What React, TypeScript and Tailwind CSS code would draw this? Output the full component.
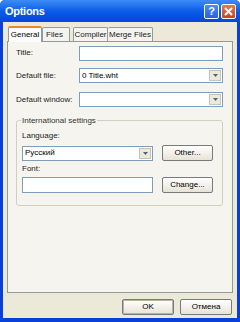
import React from 'react'

function Field({ value = '', arrow = false, className = '' }: { value?: string; arrow?: boolean; className?: string }) {
  return (
    <div className={`flex items-center bg-white border border-[#7f9db9] h-[15px] ${className}`}>
      <span className="flex-1 pl-[2px] text-[8px] leading-none text-black truncate">{value}</span>
      {arrow && (
        <span className="w-[12px] h-[11px] mr-[1px] flex items-center justify-center bg-[#ece9d8] border border-[#c3c3c3]">
          <svg width="5" height="3" viewBox="0 0 5 3"><path d="M0 0h5L2.5 3z" fill="#4d6185" /></svg>
        </span>
      )}
    </div>
  )
}

function Btn({ label, className = '' }: { label: string; className?: string }) {
  return (
    <div className={`flex items-center justify-center h-[16px] border border-[#7a7a7a] rounded-[2px] bg-gradient-to-b from-white to-[#e6e3d6] text-[8px] text-black ${className}`}>
      {label}
    </div>
  )
}

export default function App() {
  return (
    <div className="w-[240px] h-[322px] flex flex-col bg-[#0a3fd8] rounded-t-[5px] overflow-hidden font-['Liberation_Sans',sans-serif] text-[8px] text-[#222] whitespace-nowrap">
      {/* Title bar */}
      <div className="h-[22px] flex items-center justify-between pl-[5px] pr-[4px] bg-gradient-to-b from-[#3d8cf5] via-[#0a5ce8] to-[#0846d8]">
        <span className="text-white font-bold text-[11px] tracking-tight">Options</span>
        <div className="flex gap-[2px]">
          <div className="w-[15px] h-[15px] rounded-[2px] border border-white bg-gradient-to-b from-[#4c8cf5] to-[#2a5fdc] flex items-center justify-center text-white font-bold text-[11px] leading-none">?</div>
          <div className="w-[15px] h-[15px] rounded-[2px] border border-white bg-gradient-to-b from-[#e8784f] to-[#c8431e] flex items-center justify-center">
            <svg width="9" height="9" viewBox="0 0 9 9"><path d="M1 1l7 7M8 1L1 8" stroke="white" strokeWidth="2" /></svg>
          </div>
        </div>
      </div>

      {/* Body */}
      <div className="flex-1 mx-[3px] mb-[4px] bg-[#ece9d8] flex flex-col px-[4px]">
        {/* Tabs */}
        <div className="flex items-end mt-[4px] h-[15px] pl-[1px]">
          <div className="h-[16px] w-[34px] justify-center flex items-center bg-[#fcfcfe] border border-b-0 border-[#919b9c] border-t-[#e68b2c] border-t-2 rounded-t-[2px] text-black relative z-10 -mb-[1px]">General</div>
          <div className="h-[14px] w-[28px] px-[3px] flex items-center bg-[#f4f3ee] border border-b-0 border-[#919b9c] rounded-t-[2px]">Files</div>
          <div className="h-[14px] w-[35px] ml-[3px] justify-center flex items-center bg-[#f4f3ee] border border-b-0 border-[#919b9c] rounded-t-[2px]">Compiler</div>
          <div className="h-[14px] w-[45px] justify-center flex items-center bg-[#f4f3ee] border border-b-0 border-l-0 border-[#919b9c] rounded-t-[2px]">Merge Files</div>
        </div>

        {/* Panel */}
        <div className="h-[252px] border border-[#919b9c] bg-[#f5f4ee] pl-[8px] pr-[9px] pt-[4px] flex flex-col">
          <div className="flex items-center h-[14px]">
            <span className="w-[63px]">Title:</span>
            <Field className="flex-1" />
          </div>
          <div className="flex items-center h-[15px] mt-[8px]">
            <span className="w-[63px]">Default file:</span>
            <Field className="flex-1" value="0 Title.wht" arrow />
          </div>
          <div className="flex items-center h-[15px] mt-[9px]">
            <span className="w-[63px]">Default window:</span>
            <Field className="flex-1" arrow />
          </div>

          {/* Group box */}
          <div className="relative mt-[13px] h-[86px] border border-[#d0d0bf] rounded-[3px] px-[5px] pt-[10px]">
            <span className="absolute -top-[6px] left-[4px] px-[1px] bg-[#f5f4ee] text-[#333]">International settings</span>
            <div className="h-[10px] leading-[10px]">Language:</div>
            <div className="flex items-center mt-[4px] h-[16px]">
              <Field className="w-[131px]" value="Русский" arrow />
              <Btn label="Other..." className="ml-[9px] w-[51px]" />
            </div>
            <div className="h-[10px] leading-[10px] mt-[3px]">Font:</div>
            <div className="flex items-center mt-[3px] h-[16px]">
              <Field className="w-[131px] h-[16px]" />
              <Btn label="Change..." className="ml-[9px] w-[51px]" />
            </div>
          </div>
        </div>

        {/* Buttons */}
        <div className="flex justify-end gap-[6px] mt-[6px] pr-[1px]">
          <Btn label="OK" className="w-[52px] border-[#2b2b2b] shadow-[inset_0_0_0_1px_#b8b4a2]" />
          <Btn label="Отмена" className="w-[52px]" />
        </div>
      </div>
    </div>
  )
}
